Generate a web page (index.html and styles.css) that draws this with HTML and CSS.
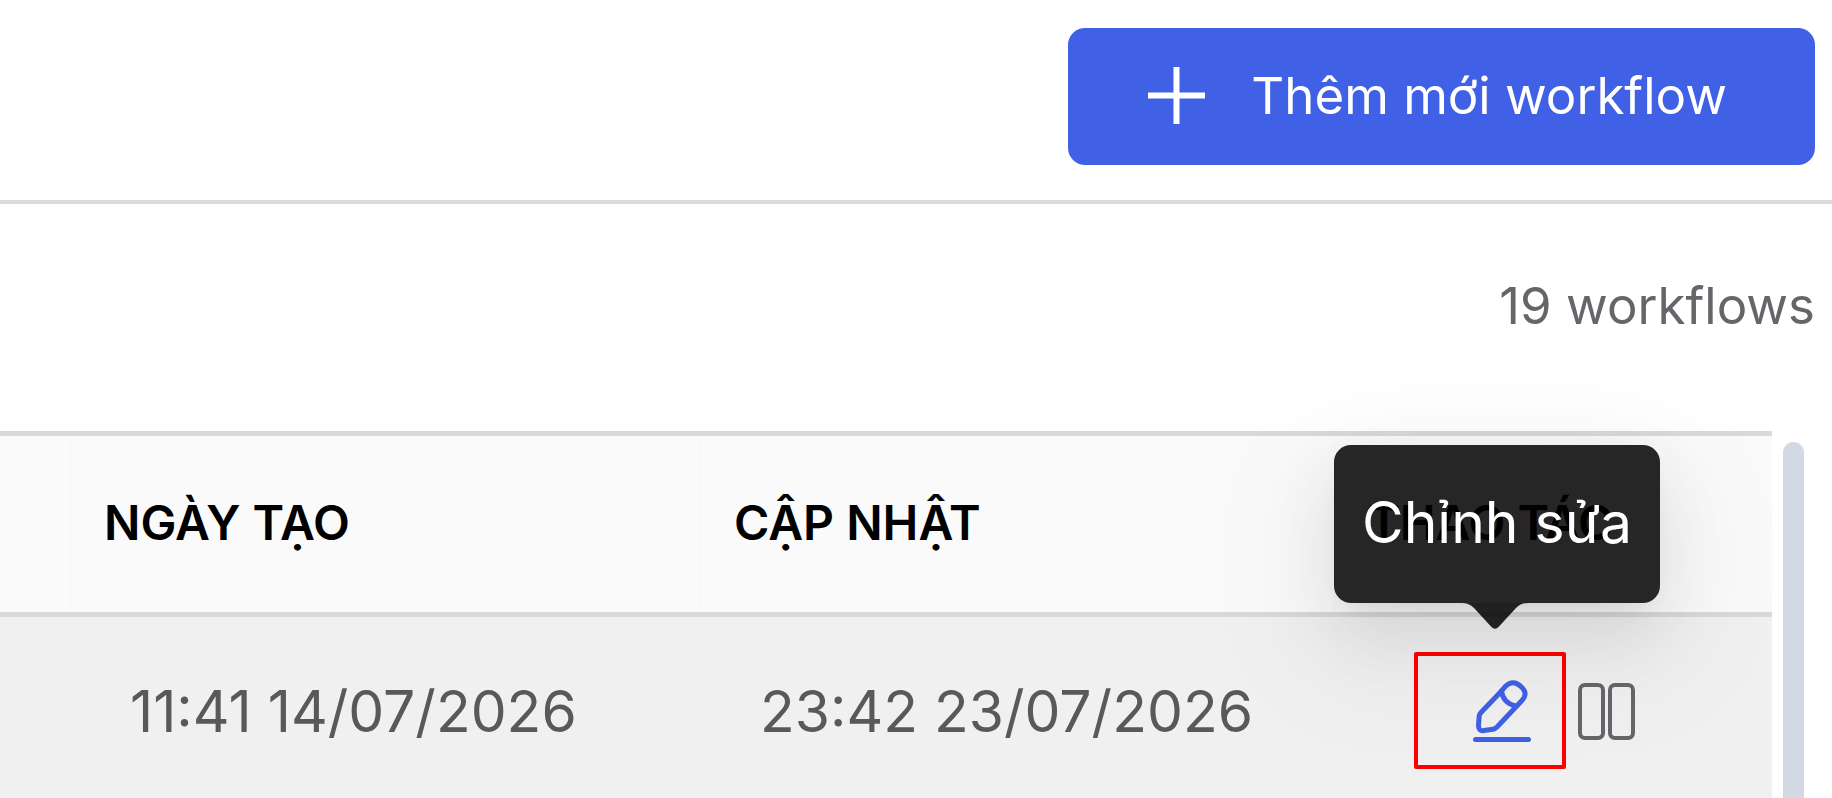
FILE: index.html
```html
<!DOCTYPE html>
<html lang="vi">
<head>
    <meta charset="UTF-8">
    <meta name="viewport" content="width=device-width, initial-scale=1.0">
    <title>Workflow</title>
    <link rel="stylesheet" href="styles.css">
</head>
<body>
    <header class="topbar">
        <button type="button" class="btn-add">
            <svg class="icon" viewBox="0 0 57 57" aria-hidden="true">
                <path d="M28.500 0V57M0 28.500H57" stroke="currentColor" stroke-width="6"/>
            </svg>
            <span>Thêm mới workflow</span>
        </button>
    </header>

    <main>
        <p class="total">19 workflows</p>

        <div class="table-area">
            <table>
                <colgroup>
                    <col>
                    <col class="col-created">
                    <col class="col-updated">
                    <col class="col-action">
                </colgroup>
                <thead>
                    <tr>
                        <th></th>
                        <th>NGÀY TẠO</th>
                        <th>CẬP NHẬT</th>
                        <th>THAO TÁC</th>
                    </tr>
                </thead>
                <tbody>
                    <tr>
                        <td></td>
                        <td>11:41 14/07/2026</td>
                        <td>23:42 23/07/2026</td>
                        <td>
                            <div class="actions">
                                <div class="edit">
                                    <button type="button" class="btn-icon btn-edit" aria-label="Chỉnh sửa" aria-describedby="editTip">
                                        <svg class="icon-edit" viewBox="0 0 58 64" fill="none" stroke="currentColor" stroke-width="5" stroke-linecap="round" stroke-linejoin="round" aria-hidden="true">
                                            <path d="M28.500 12L8 33.500Q6.500 35 6.200 37L5.500 46.500Q5.500 52.500 11 51.500L20 50.300Q22 50 24 48L48 22.500Q56 15 48.500 8Q40 -0.500 32 7.800Z"/>
                                            <path d="M28.500 12Q30 24 42.500 27"/>
                                            <path d="M2.500 60.500H55.500"/>
                                        </svg>
                                    </button>
                                    <span class="highlight"></span>
                                    <div class="tooltip" id="editTip" role="tooltip">
                                        Chỉnh sửa
                                        <svg class="arrow" viewBox="0 0 66 27" aria-hidden="true">
                                            <path d="M0 0Q7 0 12 5L29 23.500Q33 28 37 23.500L54 5Q59 0 66 0Z"/>
                                        </svg>
                                    </div>
                                </div>
                                <button type="button" class="btn-icon" aria-label="Cột">
                                    <svg class="icon" viewBox="0 0 57 57" fill="none" stroke="currentColor" stroke-width="4" aria-hidden="true">
                                        <rect x="2" y="2" width="23" height="53" rx="5"/>
                                        <rect x="32" y="2" width="23" height="53" rx="5"/>
                                    </svg>
                                </button>
                            </div>
                        </td>
                    </tr>
                </tbody>
            </table>
            <div class="scrollbar"></div>
        </div>
    </main>
</body>
</html>
```

FILE: styles.css
```css
* {
    box-sizing: border-box;
}
body {
    margin: 0;
    min-height: 100vh;
    overflow: hidden;
    font-family: Inter, "Noto Sans", sans-serif;
    background-color: #fff;
    color: #000;
}
.topbar {
    display: flex;
    justify-content: flex-end;
    padding: 28px 17px 35px;
    border-bottom: 4px solid #d8dbde;
}
button {
    border: none;
    font-family: inherit;
    cursor: pointer;
}
.icon {
    display: block;
    width: 57px;
    height: 57px;
}
.btn-add {
    display: flex;
    align-items: center;
    gap: 46px;
    height: 137px;
    padding: 0 88px 2px 80px;
    border-radius: 17px;
    background-color: #4060e6;
    color: #fff;
    font-size: 51px;
    line-height: 80px;
}
.total {
    margin: 0;
    padding: 62px 17px 85px;
    text-align: right;
    font-size: 51px;
    line-height: 80px;
    color: #65666a;
}
.table-area {
    display: flex;
    gap: 11px;
    padding-right: 28px;
}
table {
    flex: 1;
    width: 100%;
    table-layout: fixed;
    border-collapse: separate;
    border-spacing: 0;
}
.col-created {
    width: 630px;
}
.col-updated {
    width: 634px;
}
.col-action {
    width: 438px;
}
th {
    height: 186px;
    padding: 0 34px 4px;
    border-top: 5px solid #d9d9d9;
    border-bottom: 5px solid #d9d9d9;
    background: linear-gradient(#f5f5f5, #f5f5f5) left / 1px 100% no-repeat #fafafa;
    text-align: left;
    font-size: 48px;
    font-weight: 600;
    white-space: nowrap;
}
th:first-child {
    background: #fafafa;
}
td {
    height: 188px;
    padding: 0 60px;
    background-color: #f0f0f0;
    color: #595959;
    font-size: 57px;
    white-space: nowrap;
}
.actions {
    display: flex;
    align-items: center;
    justify-content: center;
    gap: 47px;
    padding-left: 2px;
}
.edit {
    position: relative;
}
.btn-icon {
    display: block;
    padding: 0;
    background: none;
    color: #65666a;
}
.btn-edit {
    color: #4060e6;
}
.icon-edit {
    display: block;
    width: 58px;
    height: 64px;
}
.highlight {
    position: absolute;
    top: -27px;
    left: -59px;
    width: 152px;
    height: 117px;
    border: 4px solid #f00;
    border-radius: 2px;
    pointer-events: none;
}
.tooltip {
    position: absolute;
    bottom: 140px;
    left: -139px;
    width: 326px;
    padding: 33px 0 35px;
    border-radius: 17px;
    background-color: rgba(0, 0, 0, 0.85);
    color: #fff;
    font-size: 57px;
    line-height: 90px;
    text-align: center;
    box-shadow: 0 26px 68px rgba(0, 0, 0, 0.08), 0 13px 26px -17px rgba(0, 0, 0, 0.12), 0 38px 120px 34px rgba(0, 0, 0, 0.05);
}
.arrow {
    position: absolute;
    top: 100%;
    left: 128px;
    width: 66px;
    height: 27px;
    fill: rgba(0, 0, 0, 0.85);
}
.scrollbar {
    width: 21px;
    margin-top: 11px;
    border-radius: 10px 10px 0 0;
    background-color: #d2d9e3;
}
```
